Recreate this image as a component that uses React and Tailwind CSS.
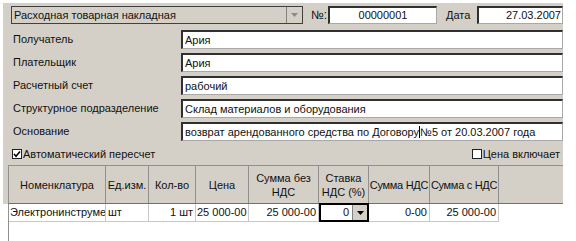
export default function App() {
  const font = "[font-family:'Liberation_Sans',Arial,sans-serif]";
  const labels = ["Получатель", "Плательщик", "Расчетный счет", "Структурное подразделение", "Основание"];
  const values = ["Ария", "Ария", "рабочий", "Склад материалов и оборудования", ""];
  const cols = [
    { w: "w-[97px]", t: "Номенклатура" },
    { w: "w-[43px]", t: "Ед.изм." },
    { w: "w-[47px]", t: "Кол-во" },
    { w: "w-[53px]", t: "Цена" },
    { w: "w-[70px]", t: "Сумма без НДС" },
    { w: "w-[50px]", t: "Ставка НДС (%)" },
    { w: "w-[61px] tracking-[-0.3px]", t: "Сумма НДС" },
    { w: "w-[69px] tracking-[-0.3px]", t: "Сумма с НДС" },
  ];
  const input = "bg-white border-t-2 border-l-2 border-[#303030] border-b border-r border-b-[#a8a8a8] border-r-[#a8a8a8]";
  return (
    <div className={`w-[576px] h-[241px] bg-white overflow-hidden text-[11px] text-[#111] ${font}`}>
      <div className="ml-[3px] mt-[3px] w-[560px] bg-[#d4d0c8] pt-[3px]">
        {/* row 1 */}
        <div className="flex items-center h-[18px]">
          <div className="ml-[8px] w-[292px] h-[18px] flex border border-[#404040] bg-[#d4d0c8]">
            <div className="flex-1 pl-[2px] leading-[16px]">Расходная товарная накладная</div>
            <div className="w-[16px] h-full border-l border-[#808080] flex items-center justify-center">
              <svg width="7" height="4" viewBox="0 0 7 4"><path d="M0 0h7L3.5 4z" fill="#8a8a8a" /></svg>
            </div>
          </div>
          <div className="ml-[8px] w-[17px] text-[12px]">№:</div>
          <div className={`w-[109px] h-[18px] ${input} text-center leading-[15px]`}>00000001</div>
          <div className="ml-[9px] w-[31px]">Дата</div>
          <div className={`w-[86px] h-[18px] ${input} text-right pr-[1px] leading-[15px]`}>27.03.2007</div>
        </div>
        {/* fields */}
        <div className="mt-[6px] flex flex-col gap-[4px]">
          {labels.map((l, i) => (
            <div key={l} className="flex items-center h-[19px]">
              <div className="w-[178px] pl-[10px]">{l}</div>
              <div className={`w-[382px] h-[19px] ${input} pl-[2px] leading-[16px] whitespace-nowrap overflow-hidden`}>
                {i === 4 ? (
                  <>возврат арендованного средства по Договору<span className="border-l border-black">№5 от 20.03.2007 года</span></>
                ) : (
                  values[i]
                )}
              </div>
            </div>
          ))}
        </div>
        {/* checkboxes */}
        <div className="mt-[5px] h-[16px] flex items-center">
          <div className="ml-[9px] w-[10px] h-[10px] border border-[#202020] bg-white flex items-center justify-center">
            <svg width="8" height="8" viewBox="0 0 8 8"><path d="M1 4l2 2.2L7 1.5" stroke="#000" strokeWidth="1.6" fill="none" /></svg>
          </div>
          <div className="ml-[1px]">Автоматический пересчет</div>
          <div className="ml-auto w-[10px] h-[10px] border border-[#202020] bg-white" />
          <div className="ml-[1px] mr-[3px]">Цена включает</div>
        </div>
        {/* table header */}
        <div className="mt-[3px] ml-[5px] flex h-[39px] border-t border-l border-[#909090] border-b border-b-[#707070]">
          {cols.map((c) => (
            <div key={c.t} className={`${c.w} shrink-0 border-r border-[#909090] flex items-center justify-center text-center leading-[14px] whitespace-nowrap overflow-hidden`}>
              {c.t === "Ставка НДС (%)" ? (<span>Ставка<br />НДС (%)</span>) : c.t === "Сумма без НДС" ? (<span>Сумма без<br />НДС</span>) : c.t}
            </div>
          ))}
          <div className="flex-1" />
        </div>
      </div>
      {/* body */}
      <div className="ml-[8px] w-[555px] h-[40px] bg-white border-l border-[#909090]">
        <div className="flex h-[18px] leading-[17px]">
          <div className="w-[97px] shrink-0 border-r border-b border-[#c8c8c8] overflow-hidden whitespace-nowrap pl-[1px]">Электронинструме</div>
          <div className="w-[43px] shrink-0 border-r border-b border-[#c8c8c8] pl-[2px]">шт</div>
          <div className="w-[47px] shrink-0 border-r border-b border-[#c8c8c8] text-right pr-[2px]">1 шт</div>
          <div className="w-[53px] shrink-0 border-r border-b border-[#c8c8c8] text-left pl-[1px] whitespace-nowrap">25 000-00</div>
          <div className="w-[70px] shrink-0 border-r border-b border-[#c8c8c8] text-right pr-[2px]">25 000-00</div>
          <div className="w-[50px] shrink-0 border-2 border-black flex -mt-[1px] h-[19px]">
            <div className="flex-1 text-right pr-[3px] leading-[14px]">0</div>
            <div className="w-[15px] bg-[#d4d0c8] border-l border-[#808080] flex items-center justify-center">
              <svg width="7" height="4" viewBox="0 0 7 4"><path d="M0 0h7L3.5 4z" fill="#000" /></svg>
            </div>
          </div>
          <div className="w-[61px] shrink-0 border-r border-b border-[#c8c8c8] text-right pr-[2px]">0-00</div>
          <div className="w-[69px] shrink-0 border-r border-b border-[#c8c8c8] text-right pr-[2px]">25 000-00</div>
        </div>
      </div>
    </div>
  );
}
